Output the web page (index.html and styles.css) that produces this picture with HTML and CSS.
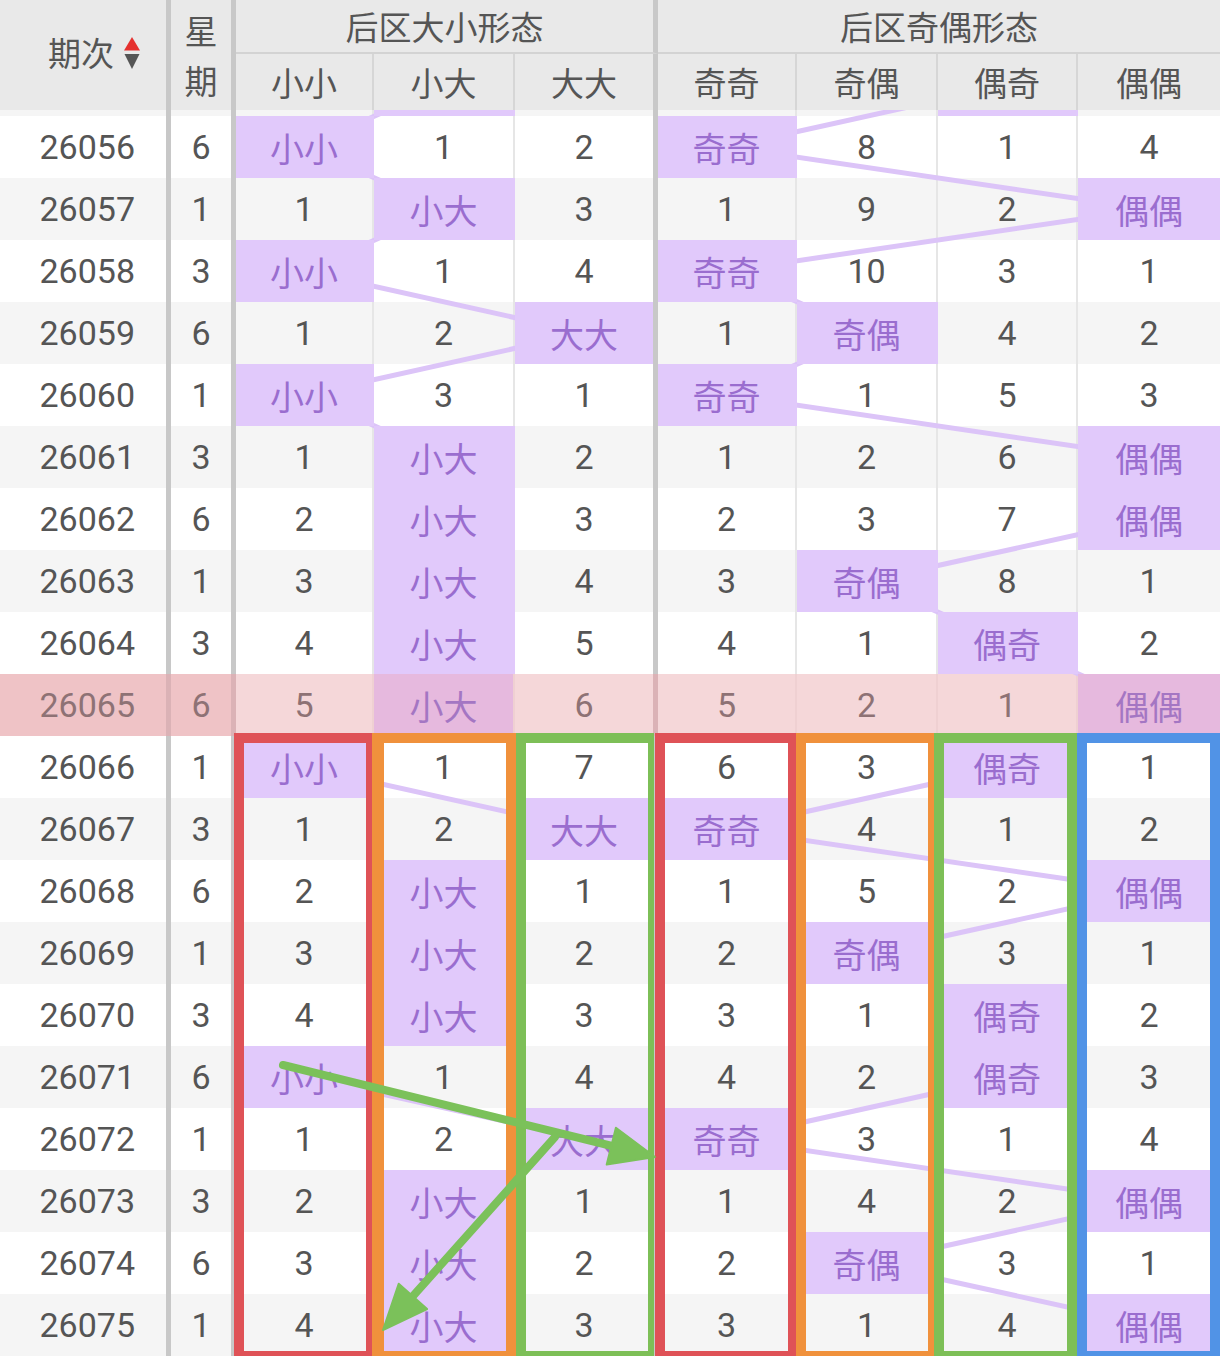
FILE: index.html
```html
<!DOCTYPE html>
<html lang="zh-CN">
<head>
<meta charset="utf-8">
<title>后区形态走势</title>
<link rel="stylesheet" href="styles.css">
</head>
<body>
<div class="page">
  <div class="head">
    <div class="h-num"><span>期次</span><svg class="sort" width="18" height="35" viewBox="0 0 18 35"><path d="M9 0 L17 13.5 L1 13.5 Z" fill="#e5312f"/><path d="M1.5 17 L16.5 17 L9 32 Z" fill="#555"/></svg></div>
    <div class="h-wk">星期</div>
    <div class="h-grp ga">后区大小形态</div>
    <div class="h-grp gb">后区奇偶形态</div>
    <div class="h-sub">小小</div>
    <div class="h-sub">小大</div>
    <div class="h-sub end">大大</div>
    <div class="h-sub">奇奇</div>
    <div class="h-sub">奇偶</div>
    <div class="h-sub">偶奇</div>
    <div class="h-sub last">偶偶</div>
  </div>

  <div class="body">
    <div class="row alt strip"><div class="c num"></div><div class="c wk"></div><div class="c"></div><div class="c hl"></div><div class="c end"></div><div class="c"></div><div class="c"></div><div class="c hl"></div><div class="c last"></div></div>
    <div class="row"><div class="c num">26056</div><div class="c wk">6</div><div class="c hl">小小</div><div class="c">1</div><div class="c end">2</div><div class="c hl">奇奇</div><div class="c">8</div><div class="c">1</div><div class="c last">4</div></div>
    <div class="row alt"><div class="c num">26057</div><div class="c wk">1</div><div class="c">1</div><div class="c hl">小大</div><div class="c end">3</div><div class="c">1</div><div class="c">9</div><div class="c">2</div><div class="c last hl">偶偶</div></div>
    <div class="row"><div class="c num">26058</div><div class="c wk">3</div><div class="c hl">小小</div><div class="c">1</div><div class="c end">4</div><div class="c hl">奇奇</div><div class="c">10</div><div class="c">3</div><div class="c last">1</div></div>
    <div class="row alt"><div class="c num">26059</div><div class="c wk">6</div><div class="c">1</div><div class="c">2</div><div class="c end hl">大大</div><div class="c">1</div><div class="c hl">奇偶</div><div class="c">4</div><div class="c last">2</div></div>
    <div class="row"><div class="c num">26060</div><div class="c wk">1</div><div class="c hl">小小</div><div class="c">3</div><div class="c end">1</div><div class="c hl">奇奇</div><div class="c">1</div><div class="c">5</div><div class="c last">3</div></div>
    <div class="row alt"><div class="c num">26061</div><div class="c wk">3</div><div class="c">1</div><div class="c hl">小大</div><div class="c end">2</div><div class="c">1</div><div class="c">2</div><div class="c">6</div><div class="c last hl">偶偶</div></div>
    <div class="row"><div class="c num">26062</div><div class="c wk">6</div><div class="c">2</div><div class="c hl">小大</div><div class="c end">3</div><div class="c">2</div><div class="c">3</div><div class="c">7</div><div class="c last hl">偶偶</div></div>
    <div class="row alt"><div class="c num">26063</div><div class="c wk">1</div><div class="c">3</div><div class="c hl">小大</div><div class="c end">4</div><div class="c">3</div><div class="c hl">奇偶</div><div class="c">8</div><div class="c last">1</div></div>
    <div class="row"><div class="c num">26064</div><div class="c wk">3</div><div class="c">4</div><div class="c hl">小大</div><div class="c end">5</div><div class="c">4</div><div class="c">1</div><div class="c hl">偶奇</div><div class="c last">2</div></div>
    <div class="row hot"><div class="c num">26065</div><div class="c wk">6</div><div class="c">5</div><div class="c hl">小大</div><div class="c end">6</div><div class="c">5</div><div class="c">2</div><div class="c">1</div><div class="c last hl">偶偶</div></div>
    <div class="row"><div class="c num">26066</div><div class="c wk">1</div><div class="c hl">小小</div><div class="c">1</div><div class="c end">7</div><div class="c">6</div><div class="c">3</div><div class="c hl">偶奇</div><div class="c last">1</div></div>
    <div class="row alt"><div class="c num">26067</div><div class="c wk">3</div><div class="c">1</div><div class="c">2</div><div class="c end hl">大大</div><div class="c hl">奇奇</div><div class="c">4</div><div class="c">1</div><div class="c last">2</div></div>
    <div class="row"><div class="c num">26068</div><div class="c wk">6</div><div class="c">2</div><div class="c hl">小大</div><div class="c end">1</div><div class="c">1</div><div class="c">5</div><div class="c">2</div><div class="c last hl">偶偶</div></div>
    <div class="row alt"><div class="c num">26069</div><div class="c wk">1</div><div class="c">3</div><div class="c hl">小大</div><div class="c end">2</div><div class="c">2</div><div class="c hl">奇偶</div><div class="c">3</div><div class="c last">1</div></div>
    <div class="row"><div class="c num">26070</div><div class="c wk">3</div><div class="c">4</div><div class="c hl">小大</div><div class="c end">3</div><div class="c">3</div><div class="c">1</div><div class="c hl">偶奇</div><div class="c last">2</div></div>
    <div class="row alt"><div class="c num">26071</div><div class="c wk">6</div><div class="c hl">小小</div><div class="c">1</div><div class="c end">4</div><div class="c">4</div><div class="c">2</div><div class="c hl">偶奇</div><div class="c last">3</div></div>
    <div class="row"><div class="c num">26072</div><div class="c wk">1</div><div class="c">1</div><div class="c">2</div><div class="c end hl">大大</div><div class="c hl">奇奇</div><div class="c">3</div><div class="c">1</div><div class="c last">4</div></div>
    <div class="row alt"><div class="c num">26073</div><div class="c wk">3</div><div class="c">2</div><div class="c hl">小大</div><div class="c end">1</div><div class="c">1</div><div class="c">4</div><div class="c">2</div><div class="c last hl">偶偶</div></div>
    <div class="row"><div class="c num">26074</div><div class="c wk">6</div><div class="c">3</div><div class="c hl">小大</div><div class="c end">2</div><div class="c">2</div><div class="c hl">奇偶</div><div class="c">3</div><div class="c last">1</div></div>
    <div class="row alt"><div class="c num">26075</div><div class="c wk">1</div><div class="c">4</div><div class="c hl">小大</div><div class="c end">3</div><div class="c">3</div><div class="c">1</div><div class="c">4</div><div class="c last hl">偶偶</div></div>

    <svg class="links" width="1220" height="1246" viewBox="0 0 1220 1246">
      <g stroke="#dcc4f8" stroke-width="5" stroke-linecap="round">
        <line x1="444.5" y1="-25" x2="305" y2="37"/>
        <line x1="305" y1="37" x2="444.5" y2="99"/>
        <line x1="444.5" y1="99" x2="305" y2="161"/>
        <line x1="305" y1="161" x2="584" y2="223"/>
        <line x1="584" y1="223" x2="305" y2="285"/>
        <line x1="305" y1="285" x2="444.5" y2="347"/>
        <line x1="444.5" y1="595" x2="305" y2="657"/>
        <line x1="305" y1="657" x2="584" y2="719"/>
        <line x1="584" y1="719" x2="444.5" y2="781"/>
        <line x1="444.5" y1="905" x2="305" y2="967"/>
        <line x1="305" y1="967" x2="584" y2="1029"/>
        <line x1="584" y1="1029" x2="444.5" y2="1091"/>

        <line x1="1008" y1="-25" x2="727.5" y2="37"/>
        <line x1="727.5" y1="37" x2="1149" y2="99"/>
        <line x1="1149" y1="99" x2="727.5" y2="161"/>
        <line x1="727.5" y1="161" x2="867.5" y2="223"/>
        <line x1="867.5" y1="223" x2="727.5" y2="285"/>
        <line x1="727.5" y1="285" x2="1149" y2="347"/>
        <line x1="1149" y1="409" x2="867.5" y2="471"/>
        <line x1="867.5" y1="471" x2="1008" y2="533"/>
        <line x1="1008" y1="533" x2="1149" y2="595"/>
        <line x1="1149" y1="595" x2="1008" y2="657"/>
        <line x1="1008" y1="657" x2="727.5" y2="719"/>
        <line x1="727.5" y1="719" x2="1149" y2="781"/>
        <line x1="1149" y1="781" x2="867.5" y2="843"/>
        <line x1="867.5" y1="843" x2="1008" y2="905"/>
        <line x1="1008" y1="967" x2="727.5" y2="1029"/>
        <line x1="727.5" y1="1029" x2="1149" y2="1091"/>
        <line x1="1149" y1="1091" x2="867.5" y2="1153"/>
        <line x1="867.5" y1="1153" x2="1149" y2="1215"/>
      </g>
    </svg>

    <div class="box red b1"></div>
    <div class="box orange b2"></div>
    <div class="box green b3"></div>
    <div class="box red b4"></div>
    <div class="box orange b5"></div>
    <div class="box green b6"></div>
    <div class="box blue b7"></div>

    <svg class="arrows" width="1220" height="1246" viewBox="0 0 1220 1246">
      <g stroke="#7bc15a" stroke-width="8" stroke-linecap="round" fill="#7bc15a">
        <line x1="283" y1="955" x2="612" y2="1036"/>
        <polygon points="655,1047 606.7,1054.6 615.9,1017.8" stroke-width="2" stroke-linejoin="round"/>
        <line x1="555" y1="1027" x2="413" y2="1186"/>
        <polygon points="383,1220 398.7,1173.8 427.1,1199" stroke-width="2" stroke-linejoin="round"/>
      </g>
    </svg>
  </div>
</div>
</body>
</html>
```

FILE: styles.css
```css
html, body {
  margin: 0;
  padding: 0;
  background: #ffffff;
}

.page {
  width: 1220px;
  height: 1356px;
  overflow: hidden;
  font-family: Roboto, "Noto Sans CJK SC", sans-serif;
  color: #555555;
}

/* ---------- header ---------- */
.head {
  display: grid;
  grid-template-columns: 171px 65px 138px 141px 143px 139px 141px 140px 142px;
  grid-template-rows: 54px 56px;
  height: 110px;
  background: #e9e9e9;
  font-family: "Noto Sans CJK SC", sans-serif;
  font-size: 33px;
  color: #555555;
}

.h-num {
  grid-row: 1 / 3;
  grid-column: 1;
  display: flex;
  align-items: center;
  justify-content: flex-end;
  padding: 0 25px 6px 0;
  border-right: 5px solid #c8c8c8;
}

.sort {
  margin-left: 9px;
  margin-top: 4px;
}

.h-wk {
  grid-row: 1 / 3;
  grid-column: 2;
  display: flex;
  align-items: center;
  justify-content: center;
  text-align: center;
  line-height: 50px;
  padding: 0 8px;
  border-right: 5px solid #c8c8c8;
}

.h-grp {
  display: flex;
  align-items: center;
  justify-content: center;
  border-bottom: 2px solid #d3d3d3;
}

.ga {
  grid-row: 1;
  grid-column: 3 / 6;
  border-right: 5px solid #c8c8c8;
}

.gb {
  grid-row: 1;
  grid-column: 6 / 10;
}

.h-sub {
  grid-row: 2;
  display: flex;
  align-items: center;
  justify-content: center;
  border-right: 2px solid #d6d6d6;
}

.h-sub.end {
  border-right: 5px solid #c8c8c8;
}

.h-sub.last {
  border-right: none;
}

/* ---------- body ---------- */
.body {
  position: relative;
  height: 1246px;
  overflow: hidden;
}

.row {
  display: grid;
  grid-template-columns: 171px 65px 138px 141px 143px 139px 141px 140px 142px;
  height: 62px;
  background: #ffffff;
}

.row.strip {
  height: 6px;
}

.row.alt {
  background: #f5f5f5;
}

.c {
  display: flex;
  align-items: center;
  justify-content: center;
  font-size: 34px;
  border-right: 2px solid #e6e6e6;
  color: #555555;
}

.c.num {
  justify-content: flex-end;
  padding-right: 31px;
  border-right: 5px solid #c8c8c8;
}

.c.wk {
  border-right: 5px solid #c8c8c8;
}

.c.end {
  border-right: 5px solid #c8c8c8;
}

.c.last {
  border-right: none;
}

.c.hl {
  position: relative;
  z-index: 2;
  background: #e1c9fb;
  color: #9a6dcf;
}

.c.hl:not(.end) {
  border-right-color: transparent;
}

/* highlighted (current) row */
.row.hot .c {
  background: #f5d7d9;
  color: #8e7275;
  border-right-color: #efd0d2;
}

.row.hot .c.num,
.row.hot .c.wk {
  background: #efc3c6;
}

.row.hot .c.num,
.row.hot .c.wk,
.row.hot .c.end {
  border-right-color: #dbb2b6;
}

.row.hot .c.last {
  border-right: none;
}

.row.hot .c.hl {
  background: #e6b9de;
  color: #a476c3;
}

/* trend lines */
.links {
  position: absolute;
  top: 0;
  left: 0;
  z-index: 1;
  pointer-events: none;
  overflow: visible;
}

/* annotation boxes */
.box {
  position: absolute;
  top: 623px;
  height: 628px;
  box-sizing: border-box;
  border: 10px solid;
  z-index: 3;
}

.red { border-color: #df5257; }
.orange { border-color: #f0913c; }
.green { border-color: #7dbf57; }
.blue { border-color: #5193e6; }

.b1 { left: 234px; width: 138px; border-right-width: 6px; }
.b2 { left: 372px; width: 144px; border-left-width: 12px; }
.b3 { left: 516px; width: 138px; border-right-width: 6px; }
.b4 { left: 655px; width: 141px; border-right-width: 8px; }
.b5 { left: 796px; width: 138px; border-right-width: 6px; }
.b6 { left: 934px; width: 143px; }
.b7 { left: 1077px; width: 143px; }

.arrows {
  position: absolute;
  top: 0;
  left: 0;
  z-index: 4;
  pointer-events: none;
}
```
